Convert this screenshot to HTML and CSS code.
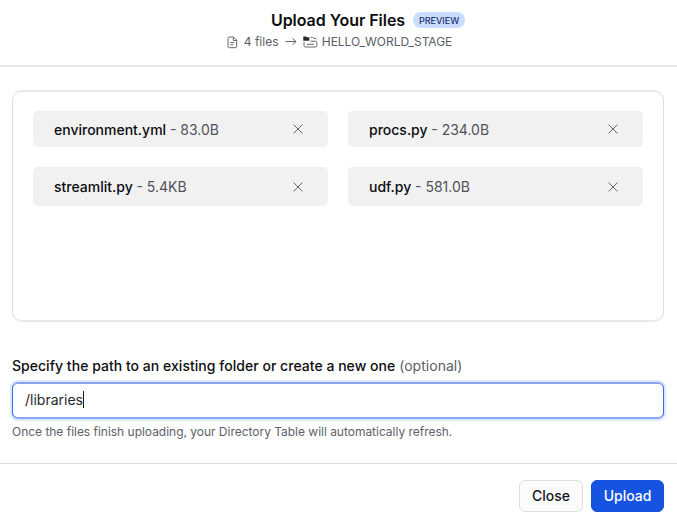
FILE: index.html
```html
<!DOCTYPE html>
<html lang="en">
<head>
<meta charset="utf-8">
<title>Upload Your Files</title>
<link rel="stylesheet" href="styles.css">
</head>
<body>
<main class="dialog">
  <header class="header">
    <div class="title-row"><h1 class="title">Upload Your Files</h1><span class="badge">PREVIEW</span></div>
    <div class="route">
      <svg class="doc-icon" width="11" height="13" viewBox="0 0 11 13"><path d="M2.500 1H6.500L9.700 4.200V10.200q0 1.500-1.500 1.500H2.500q-1.500 0-1.500-1.500V2.500Q1 1 2.500 1ZM6.300 1.200V4.500H9.500M3.300 6.600H7.300M3.300 8.800H6.300"/></svg>
      <span class="count">4 files</span>
      <svg class="arrow-icon" width="12" height="10" viewBox="0 0 12 10"><path d="M.5 4.500H11M7.500 1.300 11 4.500 7.500 7.700"/></svg>
      <svg class="stage-icon" width="15" height="12" viewBox="0 0 15 12"><path class="fill" d="M.3.500H3l.8.800H6.300V4.700H.3Z"/><path d="M7.500 1.300h2l1 1h1.700q1 0 1.200 1M1 6v3.500q0 1.500 1.500 1.500h9.800q1.500 0 1.500-1.500V6.700q0-1.500-1.500-1.500H7.500M4 8.300h7"/></svg>
      <span class="stage">HELLO_WORLD_STAGE</span>
    </div>
  </header>
  <section class="content">
    <div class="files">
      <div class="file"><span class="name">environment.yml <span class="size">- 83.0B</span></span><svg class="remove" width="10" height="10" viewBox="0 0 10 10"><path d="M.6.600 9.400 9.400M9.400.600.600 9.400"/></svg></div>
      <div class="file"><span class="name">procs.py <span class="size">- 234.0B</span></span><svg class="remove" width="10" height="10" viewBox="0 0 10 10"><path d="M.6.600 9.400 9.400M9.400.600.600 9.400"/></svg></div>
      <div class="file"><span class="name">streamlit.py <span class="size">- 5.4KB</span></span><svg class="remove" width="10" height="10" viewBox="0 0 10 10"><path d="M.6.600 9.400 9.400M9.400.600.600 9.400"/></svg></div>
      <div class="file"><span class="name">udf.py <span class="size">- 581.0B</span></span><svg class="remove" width="10" height="10" viewBox="0 0 10 10"><path d="M.6.600 9.400 9.400M9.400.600.600 9.400"/></svg></div>
    </div>
    <div class="label"><span class="label-text">Specify the path to an existing folder or create a new one</span> <span class="optional">(optional)</span></div>
    <div class="input" role="textbox" tabindex="0"><span class="value">/libraries</span><span class="caret"></span></div>
    <p class="hint">Once the files finish uploading, your Directory Table will automatically refresh.</p>
  </section>
  <footer class="footer">
    <button class="button close">Close</button>
    <button class="button upload">Upload</button>
  </footer>
</main>
</body>
</html>
```
FILE: styles.css
```css
* { box-sizing: border-box; }
body { margin: 0; background: #fff; color: #0c0d10; font-family: Inter, "Liberation Sans", sans-serif; overflow: hidden; }
.dialog { width: 677px; height: 522px; display: flex; flex-direction: column; }
.header { height: 67px; padding-top: 9px; border-bottom: 2px solid #e8e8e9; display: flex; flex-direction: column; align-items: center; }
.title-row { height: 22px; display: flex; align-items: center; gap: 8px; padding-left: 59px; }
.title { margin: 0; font-size: 16px; line-height: 22px; font-weight: 600; letter-spacing: -.04px; white-space: nowrap; }
.badge { width: 52px; height: 16px; border-radius: 8px; background: #cbddff; color: #1c3474; font-size: 9px; line-height: 17px; font-weight: 500; text-align: center; }
.route { height: 20px; margin-top: 1px; padding-left: 2px; display: flex; align-items: center; color: #5a5e66; font-size: 12px; line-height: 20px; }
svg { display: block; flex: none; fill: none; stroke: #62666d; stroke-width: 1; }
.count { margin-left: 6px; width: 35px; white-space: nowrap; }
.arrow-icon { margin-left: 6px; }
.stage-icon { margin: 0 4px 0 6px; }
.stage-icon .fill { fill: #24272d; stroke: none; }
.stage { letter-spacing: -.04px; }
.content { height: 396px; padding: 23px 13px 0 12px; }
.files { height: 232px; border: 1px solid #dedfe0; border-top: 2px solid #e8e8e9; border-bottom: 2px solid #e8e8e9; border-radius: 10px; padding: 19px 20px; display: grid; grid-template-columns: 295px 295px; grid-template-rows: 36px 39px; gap: 20px; }
.file { background: #f1f1f1; border-radius: 5px; padding: 0 25px 0 21px; display: flex; align-items: center; justify-content: space-between; font-size: 14px; }
.name { font-weight: 500; white-space: nowrap; }
.size { font-weight: 400; color: #50535a; }
.label { margin-top: 34px; height: 20px; font-size: 14px; line-height: 20px; letter-spacing: .03px; white-space: nowrap; }
.label-text { font-weight: 500; }
.optional { color: #5a5e66; }
.input { margin-top: 6px; height: 37px; border: 1px solid #3569e8; border-top: 2px solid #88a5f3; border-bottom: 2px solid #88a5f3; border-radius: 6px; box-shadow: 0 0 0 2px #dce8ff; padding: 0 0 2px 12px; display: flex; align-items: center; font-size: 14px; outline: 0; color: #25282e; }
.caret { width: 1px; height: 17px; background: #15171b; }
.hint { margin: 3px 0 0; font-size: 12px; line-height: 20px; letter-spacing: -.02px; color: #5d6168; white-space: nowrap; }
.footer { height: 59px; border-top: 1px solid #dedfe0; padding: 16px 13px 0 0; display: flex; justify-content: flex-end; gap: 8px; }
.button { height: 32px; padding: 0 0 2px; border-radius: 6px; font-family: inherit; font-size: 14px; font-weight: 500; }
.close { width: 64px; border: 1px solid #dedfe1; background: #fbfbfb; color: #15171b; }
.upload { width: 73px; border: 1px solid #1550dc; background: #1753e1; color: #fff; }
```
